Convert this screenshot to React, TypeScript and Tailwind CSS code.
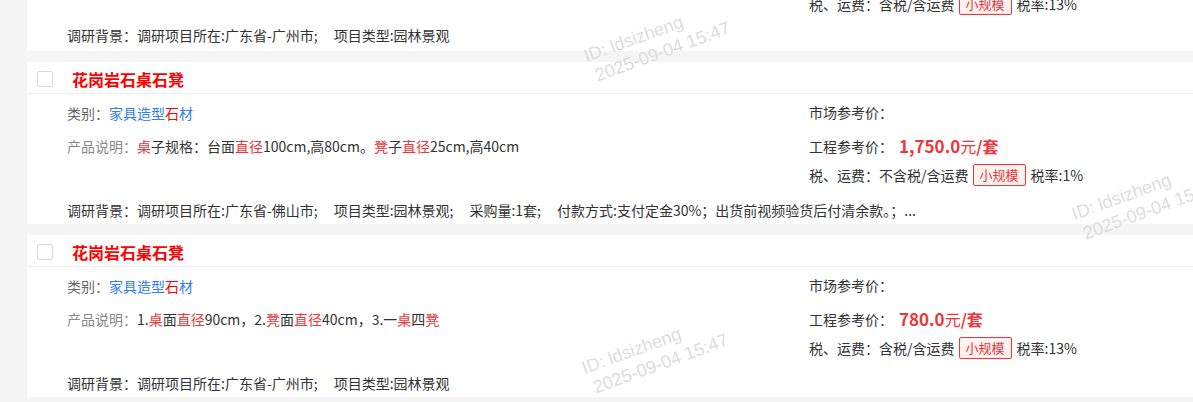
import React from "react";

type Seg = { t: string; red?: boolean };

type Item = {
  title: string;
  desc: Seg[];
  price: string;
  tax: string;
  rate: string;
  survey: string[];
  tail?: string;
};

const items: Item[] = [
  {
    title: "花岗岩石桌石凳",
    desc: [{ t: "1." }, { t: "桌", red: true }, { t: "面" }, { t: "直径", red: true }, { t: "90cm，2." }, { t: "凳", red: true }, { t: "面" }, { t: "直径", red: true }, { t: "40cm，3.一" }, { t: "桌", red: true }, { t: "四" }, { t: "凳", red: true }],
    price: "780.0",
    tax: "含税/含运费",
    rate: "税率:13%",
    survey: ["调研项目所在:广东省-广州市;", "项目类型:园林景观"],
  },
  {
    title: "花岗岩石桌石凳",
    desc: [{ t: "桌", red: true }, { t: "子规格：台面" }, { t: "直径", red: true }, { t: "100cm,高80cm。" }, { t: "凳", red: true }, { t: "子" }, { t: "直径", red: true }, { t: "25cm,高40cm" }],
    price: "1,750.0",
    tax: "不含税/含运费",
    rate: "税率:1%",
    survey: ["调研项目所在:广东省-佛山市;", "项目类型:园林景观;", "采购量:1套;"],
    tail: "付款方式:支付定金30%；出货前视频验货后付清余款。；...",
  },
  {
    title: "花岗岩石桌石凳",
    desc: [{ t: "1." }, { t: "桌", red: true }, { t: "面" }, { t: "直径", red: true }, { t: "90cm，2." }, { t: "凳", red: true }, { t: "面" }, { t: "直径", red: true }, { t: "40cm，3.一" }, { t: "桌", red: true }, { t: "四" }, { t: "凳", red: true }],
    price: "780.0",
    tax: "含税/含运费",
    rate: "税率:13%",
    survey: ["调研项目所在:广东省-广州市;", "项目类型:园林景观"],
  },
];

function Card({ item, first }: { item: Item; first?: boolean }) {
  return (
    <div className="bg-white">
      <div className="h-[32px] pt-[3px] flex items-center border-b border-[#eeeeee]">
        <div className="ml-[10px] w-[16px] h-[16px] border border-[#d9d9d9] rounded-[2px] bg-white" />
        <span className="ml-[19px] text-[16px] font-bold text-[#ff0000]">{item.title}</span>
      </div>
      <div className={`pl-[40px] pt-[8px] ${first ? "pb-[5px]" : "pb-[3px]"} text-[14px] text-[#333333]`}>
        <div className="flex">
          <div className="w-[742px]">
            <div className="h-[22px] leading-[22px]">
              <span className="text-[#666666]">类别：</span>
              <span className="text-[#2f80ed]">家具造型</span>
              <span className="text-[#ff0000]">石</span>
              <span className="text-[#2f80ed]">材</span>
            </div>
            <div className="mt-[11px] h-[22px] leading-[22px]">
              <span className="text-[#888888]">产品说明：</span>
              {item.desc.map((s, i) => (
                <span key={i} className={s.red ? "text-[#f0353a]" : ""}>
                  {s.t}
                </span>
              ))}
            </div>
          </div>
          <div>
            <div className="-mt-[1px] h-[22px] leading-[22px]">市场参考价：</div>
            <div className="mt-[12px] h-[22px] flex items-center">
              <span>工程参考价：</span>
              <span className="ml-[6px] text-[17px] font-bold text-[#f0353a]">
                {item.price}
                <span className="text-[16px] font-normal">元</span>
                <span className="text-[16px]">/套</span>
              </span>
            </div>
            <div className="mt-[7px] h-[22px] flex items-center">
              <span>税、运费：{item.tax}</span>
              <span className="ml-[4px] h-[22px] px-[6px] flex items-center border border-[#f0353a] rounded-[2px] bg-[#fff1f0] text-[13px] text-[#f0353a]">
                小规模
              </span>
              <span className="ml-[5px]">{item.rate}</span>
            </div>
          </div>
        </div>
        <div className={`${first ? "mt-[9px]" : "mt-[13px]"} h-[22px] leading-[22px] whitespace-nowrap`}>
          <span>调研背景：</span>
          {item.survey.map((s, i) => (
            <span key={i} className="mr-[16px]">
              {s}
            </span>
          ))}
          {item.tail && <span>{item.tail}</span>}
        </div>
      </div>
    </div>
  );
}

function Watermark({ left, top }: { left: number; top: number }) {
  return (
    <div
      className="absolute w-[140px] leading-[22px] text-[18px] text-[#dddddd] -rotate-[20deg] pointer-events-none whitespace-nowrap"
      style={{ left: left - 70, top: top - 22, fontFamily: '"Liberation Sans", Arial, sans-serif' }}
    >
      <div>ID: ldsizheng</div>
      <div className="pl-[4px]">2025-09-04 15:47</div>
    </div>
  );
}

export default function App() {
  return (
    <div
      className="relative w-[1193px] h-[402px] overflow-hidden bg-[#f5f5f5]"
      style={{ fontFamily: '"Microsoft YaHei", "Noto Sans CJK SC", "Noto Sans", sans-serif' }}
    >
      <div className="ml-[27px] -mt-[109px] flex flex-col gap-[11px]">
        {items.map((it, i) => (
          <Card key={i} item={it} first={i === 0} />
        ))}
      </div>
      <Watermark left={654} top={43} />
      <Watermark left={1142} top={201} />
      <Watermark left={652} top={355} />
    </div>
  );
}
